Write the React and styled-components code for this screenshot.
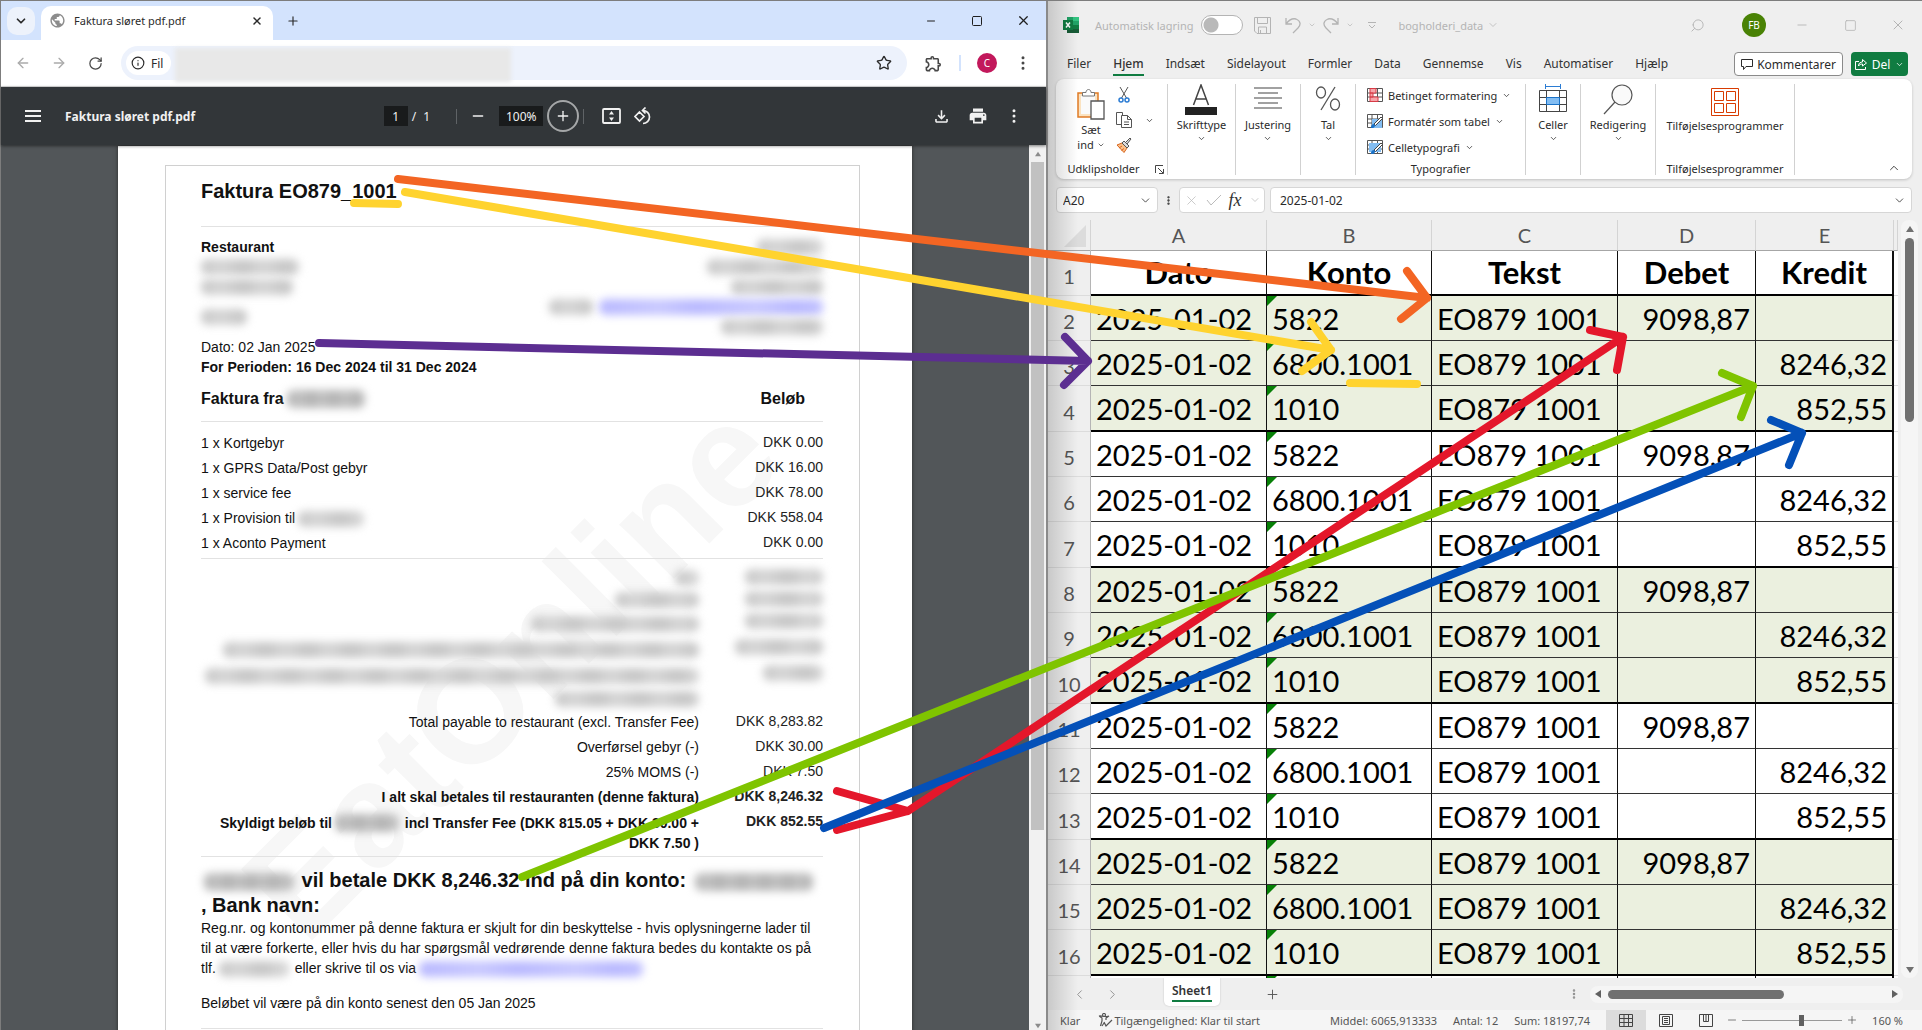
import React from "react";
import styled, { createGlobalStyle } from "styled-components";
import {
  ArrowLeft,
  ArrowRight,
  ChevronDown,
  ChevronLeft,
  ChevronRight,
  ChevronUp,
  Info,
  Minus,
  MoreVertical,
  Plus,
  RotateCw,
  Search,
  Square,
  Star,
  X,
} from "lucide-react";
import {
  MdOutlineExtension,
  MdOutlineFileDownload,
  MdPrint,
  MdPublic,
} from "react-icons/md";

const GlobalStyle = createGlobalStyle`
  * {
    box-sizing: border-box;
  }
  body {
    margin: 0;
    font-family: "Noto Sans", "Open Sans", sans-serif;
    font-size: 12px;
    color: #2b2b2b;
  }
  button,
  input {
    font: inherit;
    color: inherit;
  }
  button {
    display: inline-flex;
    align-items: center;
    justify-content: center;
    padding: 0;
    border: 0;
    background: none;
    white-space: nowrap;
  }
  svg {
    flex: none;
  }
`;

const Desktop = styled.div`
  position: relative;
  display: grid;
  grid-template-columns: minmax(0, 1048fr) minmax(0, 874fr);
  height: 100vh;
  overflow: hidden;
  border-top: 1px solid #7d7d7d;
`;

/* ---------- browser window ---------- */

const Browser = styled.section`
  display: flex;
  flex-direction: column;
  min-height: 0;
  border-left: 1px solid #7d7d7d;
  border-right: 2px solid #8a8a8a;
  background: #fff;
`;

const TabStrip = styled.div`
  display: flex;
  align-items: center;
  height: 39px;
  padding-left: 6px;
  background: #d3e3fd;
`;

const TabSearch = styled.button`
  width: 28px;
  height: 28px;
  border-radius: 10px;
  background: #edf2fb;
`;

const BrowserTab = styled.div`
  display: flex;
  align-items: center;
  align-self: flex-end;
  gap: 8px;
  width: 232px;
  height: 34px;
  margin: 0 13px 0 6px;
  padding: 0 10px 5px 8px;
  border-radius: 10px 10px 0 0;
  background: #fff;
  font-size: 11px;
  span {
    flex: 1;
  }
`;

const WindowButtons = styled.div`
  display: flex;
  margin-left: ${(p) => (p.$gap ? `${p.$gap}px` : "auto")};
  color: ${(p) => p.$color || "#1f1f1f"};
  button {
    width: ${(p) => p.$width || 46}px;
    height: 36px;
  }
`;

const AddressRow = styled.div`
  display: flex;
  align-items: center;
  height: 47px;
  padding: 0 5px 0 4px;
  border-bottom: 1px solid #dcdcdc;
  border-radius: 8px 8px 0 0;
  background: #fff;
`;

const RoundButton = styled.button`
  width: 36px;
  height: 36px;
  color: ${(p) => (p.$muted ? "#ababab" : "#474747")};
`;

const AddressBar = styled.label`
  display: flex;
  flex: 1;
  align-items: center;
  height: 34px;
  margin: 0 8px;
  padding: 0 15px 0 5px;
  border-radius: 17px;
  background: #edf2fc;
`;

const FileChip = styled.span`
  display: flex;
  align-items: center;
  gap: 6px;
  height: 24px;
  padding: 0 8px 0 5px;
  border-radius: 12px;
  background: #fff;
`;

const AddressInput = styled.input`
  flex: 0 1 336px;
  min-width: 0;
  height: 34px;
  margin: 3px auto 0 4px;
  border: 0;
  background: #e8e8e8;
  filter: blur(2px);
`;

const ToolDivider = styled.span`
  width: 2px;
  height: 16px;
  margin: 0 8px;
  background: #d3e3fd;
`;

const Avatar = styled.span`
  display: grid;
  place-items: center;
  width: ${(p) => p.$size}px;
  height: ${(p) => p.$size}px;
  border-radius: 50%;
  background: ${(p) => p.$color};
  color: #fff;
  font-size: 10px;
`;

/* ---------- pdf viewer ---------- */

const PdfBar = styled.div`
  display: grid;
  grid-template-columns: 1fr auto 1fr;
  align-items: center;
  height: 58px;
  padding: 0 23px 0 24px;
  background: #323639;
  color: #f1f1f1;
  z-index: 1;
  box-shadow: 0 1px 3px rgba(0, 0, 0, 0.5);
`;

const PdfGroup = styled.div`
  display: flex;
  align-items: center;
  justify-content: ${(p) => (p.$end ? "flex-end" : "flex-start")};
  gap: ${(p) => p.$gap || 0}px;
`;

const PdfControls = styled(PdfGroup)`
  padding-right: 12px;
`;

const PdfTitle = styled.h1`
  margin: 0;
  font-size: 12px;
  font-weight: 700;
`;

const DarkInput = styled.input`
  width: ${(p) => p.$width}px;
  height: 20px;
  padding: 0;
  border: 0;
  background: #191b1c;
  text-align: center;
`;

const PdfDivider = styled.span`
  width: 1px;
  height: 15px;
  margin-right: ${(p) => p.$space || 0}px;
  background: #5f6366;
`;

const ZoomInButton = styled.button`
  width: 32px;
  height: 32px;
  border: 2px solid #a5a7a8;
  border-radius: 50%;
`;

const Viewer = styled.div`
  display: flex;
  flex: 1;
  min-height: 0;
  background: #525659;
`;

const PageArea = styled.div`
  flex: 1;
  padding-top: 1px;
  overflow: hidden;
`;

const VScroll = styled.div`
  display: flex;
  flex-direction: column;
  align-items: center;
  justify-content: space-between;
  width: 17px;
  padding: 6px 0 1px;
  background: #f1f1f1;
  color: #8b8b8b;
`;

const VThumb = styled.div`
  width: 13px;
  height: 668px;
  margin: 5px 0 auto;
  background: #c1c1c1;
`;

const Page = styled.article`
  position: relative;
  width: 794px;
  margin: 0 auto;
  padding: 19px 52px 0 47px;
  background: #fff;
  color: #111;
  font: 14px/20px "Liberation Sans", Arial, sans-serif;
  box-shadow: 0 0 4px #2b2b2b;
`;

const Watermark = styled.div`
  position: absolute;
  top: 678px;
  left: 188px;
  color: #f7f7f7;
  font-size: 146px;
  font-weight: 700;
  line-height: 146px;
  transform: rotate(-45deg);
  transform-origin: 0 124px;
`;

const Frame = styled.div`
  padding: 13px 36px 60px 35px;
  border: 1px solid #d0d0d0;
  > * {
    position: relative;
  }
`;

const InvoiceTitle = styled.h2`
  margin: 0 0 23px;
  font-size: 20px;
  line-height: 24px;
`;

const Parties = styled.div`
  display: flex;
  justify-content: space-between;
  height: 111px;
  padding-top: 10px;
  border-top: 1px solid #e2e2e2;
`;

const Party = styled.div`
  display: flex;
  flex-direction: column;
  align-items: ${(p) => (p.$right ? "flex-end" : "flex-start")};
`;

const PartyLine = styled.div`
  display: flex;
  gap: 6px;
  height: 20px;
  margin-top: ${(p) => (p.$spaced ? 10 : 0)}px;
`;

const Redacted = styled.span`
  display: inline-block;
  width: ${(p) => p.$width}px;
  height: ${(p) => (p.$dark ? 18 : 16)}px;
  margin: ${(p) => (p.$inline ? "0 2px 0 3px" : "2px 0")};
  border-radius: 7px;
  vertical-align: ${(p) => (p.$inline ? "-4px" : "middle")};
  background: ${(p) =>
    p.$link
      ? "repeating-linear-gradient(90deg, #b9b9ff, #c8c8ff 61px, #b9b9ff 97px)"
      : p.$dark
      ? "repeating-linear-gradient(90deg, #b2b2b2, #c2c2c2 13px, #b2b2b2 23px)"
      : "repeating-linear-gradient(90deg, #c6c6c6, #d6d6d6 19px, #c6c6c6 43px)"};
  filter: blur(4px);
`;

const PlainLine = styled.p`
  margin: 0;
  font-weight: ${(p) => (p.$bold ? 700 : 400)};
`;

const InvoiceTable = styled.table`
  width: 100%;
  margin-top: ${(p) => p.$gap || 0}px;
  padding-top: ${(p) => p.$top}px;
  border-top: ${(p) => (p.$rule ? "1px solid #e2e2e2" : "0")};
  border-spacing: 0;
`;

const HeadCell = styled.th`
  height: 44px;
  padding: 0 ${(p) => (p.$right ? 18 : 0)}px 0 0;
  font-size: 16px;
  text-align: ${(p) => (p.$right ? "right" : "left")};
`;

const InvoiceRow = styled.tr`
  height: ${(p) => p.$height || 25}px;
  font-weight: ${(p) => (p.$bold ? 700 : 400)};
`;

const LabelCell = styled.td`
  padding: 0;
  text-align: ${(p) => (p.$right ? "right" : "left")};
`;

const AmountCell = styled.td`
  width: 124px;
  padding: 0;
  text-align: right;
  vertical-align: top;
  line-height: ${(p) => p.$line || 25}px;
  color: #222;
`;

const Payout = styled.h3`
  margin: 0;
  padding-top: 11px;
  border-top: 1px solid #e2e2e2;
  font-size: 20px;
  line-height: 25px;
`;

const Note = styled.p`
  margin: 0 0 15px;
`;

const PageRule = styled.hr`
  margin: 0;
  border: 0;
  border-top: 1px solid #e2e2e2;
`;

/* ---------- spreadsheet window ---------- */

const Excel = styled.section`
  position: relative;
  display: flex;
  flex-direction: column;
  min-width: 0;
  min-height: 0;
  background: #efefef;
  font-size: 11px;
  &::after {
    content: "";
    position: absolute;
    inset: 0 auto 0 0;
    width: 30px;
    background: linear-gradient(90deg, rgba(0, 0, 0, 0.16), transparent);
    pointer-events: none;
  }
`;

const TitleBar = styled.div`
  display: flex;
  align-items: center;
  height: 46px;
  padding: 2px 0 0 15px;
  color: #b4b4b4;
`;

const AutoSave = styled.label`
  display: flex;
  align-items: center;
  gap: 8px;
  margin: 0 11px 0 15px;
`;

const Toggle = styled.input`
  appearance: none;
  width: 42px;
  height: 20px;
  margin: 0;
  border: 1px solid #b4b4b4;
  border-radius: 10px;
  background: radial-gradient(circle at 9px 9px, #b9b9b9 7px, #fff 8px);
`;

const QuickTools = styled.div`
  display: flex;
  align-items: center;
  gap: 7px;
  margin-right: 22px;
`;

const FileName = styled.button`
  gap: 4px;
`;

const TitleEnd = styled.div`
  display: flex;
  align-items: center;
  gap: 37px;
  margin-left: auto;
`;

const TitleSearch = styled(Search)`
  transform: scaleX(-1);
`;

const MenuRow = styled.nav`
  display: flex;
  align-items: center;
  gap: 22px;
  height: 32px;
  padding: 2px 14px 0 19px;
  font-size: 12px;
`;

const MenuLink = styled.a`
  padding: 3px 0 2px;
  border-bottom: 2px solid ${(p) => (p.$active ? "#107c41" : "transparent")};
  color: #333;
  font-weight: ${(p) => (p.$active ? 500 : 400)};
  text-decoration: none;
`;

const CommentButton = styled.button`
  gap: 4px;
  height: 24px;
  margin-left: auto;
  padding: 0 6px;
  border: 1px solid #8a8a8a;
  border-radius: 4px;
  background: #fff;
`;

const ShareButton = styled.button`
  gap: 5px;
  width: 57px;
  height: 24px;
  margin-left: -14px;
  border-radius: 4px;
  background: #107c41;
  color: #fff;
`;

const Ribbon = styled.div`
  display: flex;
  height: 100px;
  margin: 0 10px 8px 8px;
  padding: 5px 0 4px;
  border-radius: 8px;
  background: #fff;
  box-shadow: 0 1px 3px rgba(0, 0, 0, 0.2);
`;

const Group = styled.div`
  display: flex;
  flex-direction: column;
  align-items: center;
  justify-content: space-between;
  flex: none;
  width: ${(p) => p.$width}px;
  border-right: 1px solid #d1d1d1;
`;

const BigButton = styled.button`
  flex-direction: column;
  gap: 2px;
  line-height: 15px;
`;

const GroupName = styled.div`
  position: relative;
  width: 100%;
  line-height: 12px;
  text-align: center;
  padding-right: ${(p) => (p.$launcher ? 16 : 0)}px;
  svg {
    position: absolute;
    right: 3px;
    top: 2px;
  }
`;

const Clipboard = styled.div`
  display: grid;
  grid-template-columns: 32px 16px 16px;
  gap: 9px;
  width: 100%;
  padding: 3px 0 0 19px;
`;

const SideIcons = styled.div`
  display: flex;
  flex-direction: column;
  gap: 9px;
`;

const StyleList = styled.div`
  display: flex;
  flex-direction: column;
  gap: 10px;
  align-self: flex-start;
  padding: 3px 0 0 11px;
`;

const StyleButton = styled.button`
  justify-content: flex-start;
  gap: 5px;
  height: 16px;
`;

const RibbonEnd = styled.div`
  display: flex;
  flex: 1;
  align-items: flex-end;
  justify-content: flex-end;
  padding-right: 11px;
`;

const FormulaRow = styled.div`
  display: flex;
  align-items: center;
  gap: 5px;
  height: 26px;
  margin: 0 10px 0 8px;
  font-size: 12px;
`;

const FieldBox = styled.label`
  display: flex;
  align-items: center;
  flex: ${(p) => (p.$width ? `0 0 ${p.$width}px` : 1)};
  min-width: 0;
  height: 26px;
  padding: 0 5px;
  border: 1px solid #d6d6d6;
  border-radius: 4px;
  background: #fff;
`;

const FieldInput = styled.input`
  flex: 1;
  width: 0;
  min-width: 0;
  padding: 0 0 0 ${(p) => (p.$wide ? 4 : 1)}px;
  border: 0;
  background: none;
`;

const FxBox = styled.div`
  display: flex;
  align-items: center;
  justify-content: space-around;
  flex: 0 0 86px;
  height: 26px;
  border: 1px solid #d6d6d6;
  border-radius: 4px;
  background: #fff;
  color: #bbb;
`;

const Fx = styled.button`
  color: #333;
  font: italic 18px "Liberation Serif", serif;
`;

const SheetArea = styled.div`
  display: flex;
  flex: 1;
  min-height: 0;
  padding-top: 7px;
  overflow: hidden;
`;

const SheetClip = styled.div`
  flex: 1;
  min-width: 0;
  overflow: hidden;
`;

const Sheet = styled.table`
  width: 100%;
  table-layout: fixed;
  border-spacing: 0;
  color: #000;
  font: 29px/35px Lato, Carlito, sans-serif;
`;

const ColWidth = styled.col`
  width: ${(p) => (p.$width ? `${p.$width}px` : "auto")};
`;

const ColHead = styled.th`
  height: 31px;
  padding: 0;
  border-right: 1px solid #d4d4d4;
  border-bottom: 1px solid #a6a6a6;
  color: #555;
  font-size: 20px;
  font-weight: 400;
  line-height: 24px;
`;

const CornerHead = styled(ColHead)`
  text-align: right;
  padding-right: 4px;
  svg {
    display: inline-block;
    vertical-align: bottom;
  }
`;

const SheetRow = styled.tr`
  height: ${(p) => (p.$last ? 46 : 45)}px;
`;

const RowHead = styled.th`
  padding: 7px 0 0;
  border-right: 1px solid #b5b5b5;
  border-bottom: 1px solid #dcdcdc;
  color: #555;
  font-size: 20px;
  font-weight: 400;
`;

const Cell = styled.td`
  position: relative;
  padding: 0 5px;
  overflow: hidden;
  white-space: nowrap;
  border-right: ${(p) => (p.$edge ? 2 : 1)}px solid #111;
  border-bottom: ${(p) => (p.$thick ? "2px solid #000" : "1px solid #333")};
  background: ${(p) => (p.$shade ? "#ebf0df" : "#fff")};
  text-align: ${(p) => p.$align || "left"};
`;

const TitleCell = styled(Cell)`
  font-size: 31px;
  font-weight: 700;
`;

const ErrorMark = styled.span`
  position: absolute;
  top: 0;
  left: 0;
  border-top: 10px solid #078007;
  border-right: 10px solid transparent;
`;

const Filler = styled.td`
  border-bottom: 1px solid #dcdcdc;
  background: #fff;
`;

const SheetScroll = styled.div`
  display: flex;
  flex-direction: column;
  align-items: center;
  width: 17px;
  margin: 0 4px 0 3px;
  padding: 5px 0 4px;
  border-radius: 8px;
  background: #f5f5f5;
  color: #707070;
`;

const SheetThumb = styled.div`
  width: 9px;
  height: 184px;
  margin: 5px 0 auto;
  border-radius: 5px;
  background: #707070;
`;

const SheetTabs = styled.div`
  display: flex;
  align-items: center;
  height: 32px;
  padding: 0 19px 0 24px;
  color: #8f8f8f;
`;

const NavButtons = styled.div`
  display: flex;
  gap: 18px;
  width: 92px;
`;

const SheetTab = styled.button`
  align-self: flex-start;
  height: 28px;
  padding: 0 8px 2px;
  border-radius: 0 0 5px 5px;
  background: #fff;
  box-shadow: 0 0 2px rgba(0, 0, 0, 0.2);
  color: #333;
  font-size: 12px;
  font-weight: 600;
  span {
    border-bottom: 2px solid #107c41;
    line-height: 19px;
  }
`;

const AddSheet = styled.button`
  margin: 0 auto 0 45px;
  color: #555;
`;

const HScroll = styled.div`
  display: flex;
  align-items: center;
  width: 313px;
  height: 17px;
  margin-left: 10px;
  padding: 0 4px;
  border-radius: 8px;
  background: #f5f5f5;
  color: #606060;
`;

const HThumb = styled.div`
  width: 176px;
  height: 9px;
  margin: 0 auto 0 6px;
  border-radius: 5px;
  background: #707070;
`;

const StatusBar = styled.footer`
  display: flex;
  align-items: center;
  height: 20px;
  padding: 0 19px 0 12px;
  background: #f5f5f5;
  color: #555;
  white-space: nowrap;
`;

const Accessibility = styled.span`
  display: flex;
  align-items: center;
  gap: 1px;
  margin: 0 auto 0 18px;
`;

const Stat = styled.span`
  margin-right: 16px;
`;

const ViewButton = styled.button`
  width: 40px;
  height: 20px;
  background: ${(p) => (p.$active ? "#dcdcdc" : "none")};
  color: #444;
`;

const ZoomSlider = styled.input`
  appearance: none;
  width: 100px;
  height: 12px;
  margin: 0 4px;
  background: linear-gradient(#999, #999) center / 100% 1px no-repeat;
  &::-webkit-slider-thumb {
    appearance: none;
    width: 5px;
    height: 11px;
    background: #606060;
  }
`;

const ZoomValue = styled.output`
  margin-left: 14px;
`;

/* ---------- annotation arrows ---------- */

const Arrows = styled.svg`
  position: absolute;
  top: -1px;
  left: 0;
  width: 100%;
  pointer-events: none;
`;

const arrows = [
  { color: "#f36523", d: "M398 179L1427 298M1407 271L1427 298L1401 319" },
  {
    color: "#ffd32f",
    d: "M405 192L1331 350M1311 322L1331 350L1302 371M354 203L398 204M1350 383L1417 384",
  },
  { color: "#5c2e91", d: "M319 343L1088 361M1065 337L1088 361L1064 385" },
  {
    color: "#e4172b",
    d: "M837 791L908 811L837 830M908 811L1623 337M1590 330L1623 337L1617 370",
  },
  { color: "#7fc400", d: "M522 877L1753 386M1722 373L1753 386L1741 417" },
  { color: "#0450b8", d: "M824 828L1802 433M1771 420L1802 433L1789 465" },
];

const lines = [
  ["1 x Kortgebyr", "DKK 0.00"],
  ["1 x GPRS Data/Post gebyr", "DKK 16.00"],
  ["1 x service fee", "DKK 78.00"],
  ["1 x Provision til", "DKK 558.04", 66],
  ["1 x Aconto Payment", "DKK 0.00"],
];

const hiddenLines = [
  { height: 22, label: 24, amount: 78 },
  { height: 22, label: 84, amount: 78 },
  { height: 26, label: 168, amount: 78 },
  { height: 26, label: 476, amount: 88 },
  { height: 26, label: 494, amount: 60 },
  { height: 20, label: 144, amount: 0 },
];

const totals = [
  ["Total payable to restaurant (excl. Transfer Fee)", "DKK 8,283.82"],
  ["Overførsel gebyr (-)", "DKK 30.00"],
  ["25% MOMS (-)", "DKK 7.50"],
  ["I alt skal betales til restauranten (denne faktura)", "DKK 8,246.32", true],
];

const menu = [
  "Filer",
  "Hjem",
  "Indsæt",
  "Sidelayout",
  "Formler",
  "Data",
  "Gennemse",
  "Vis",
  "Automatiser",
  "Hjælp",
];

const columns = ["A", "B", "C", "D", "E"];
const titles = ["Dato", "Konto", "Tekst", "Debet", "Kredit"];

const pattern = [
  ["5822", "9098,87", ""],
  ["6800.1001", "", "8246,32"],
  ["1010", "", "852,55"],
];

const sheetRows = Array.from({ length: 15 }, (_, i) => ({
  number: i + 2,
  values: pattern[i % 3],
  shade: Math.floor(i / 3) % 2 === 0,
  last: i % 3 === 2,
}));

const Caret = ({ dir = "up", size = 8 }) => {
  const paths = {
    up: "M0 7L4 1L8 7Z",
    down: "M0 1L4 7L8 1Z",
    left: "M7 0L1 4L7 8Z",
    right: "M1 0L7 4L1 8Z",
  };
  return (
    <svg width={size} height={size} viewBox="0 0 8 8" fill="currentColor">
      <path d={paths[dir]} />
    </svg>
  );
};

const ExcelLogo = () => (
  <svg width="17" height="17" viewBox="0 0 17 17">
    <path fill="#21a366" d="M4 0h12v8H4z" />
    <path fill="#33c481" d="M10 0h6v4h-6z" />
    <path fill="#185c37" d="M4 8h12v8H4z" />
    <path fill="#107c41" d="M0 3h10v10H0zM10 8h6v4h-6z" />
    <path stroke="#fff" strokeWidth="1.5" d="M3 5.5l4 5M7 5.5l-4 5" />
  </svg>
);

const SaveIcon = () => (
  <svg width="17" height="17" viewBox="0 0 17 17" fill="none" stroke="currentColor">
    <path d="M.5 .5h16v16H3L.5 14zM3.500 .5v6h10v-6M4.500 16v-6h8v6M6.500 16v-3" />
  </svg>
);

const UndoIcon = ({ flip }) => (
  <svg width="16" height="17" viewBox="0 0 16 17" fill="none" stroke="currentColor" strokeWidth="1.3">
    <path
      transform={flip ? "matrix(-1 0 0 1 16 0)" : undefined}
      d="M1 1v6h6M1 7C4 3 7 1 11 2c5 2 5 6 2 9l-5 5"
    />
  </svg>
);

const CustomizeIcon = () => (
  <svg width="8" height="8" viewBox="0 0 8 8" fill="none" stroke="currentColor">
    <path d="M0 1.5h8M1 4l3 3 3-3" />
  </svg>
);

const PasteIcon = () => (
  <svg width="28" height="31" viewBox="0 0 28 31" fill="none">
    <path stroke="#e07b26" strokeWidth="1.5" fill="#fbe3c1" d="M1 4h20v24H1z" />
    <path fill="#fafafa" d="M4 7h14v18H4z" />
    <path stroke="#777" fill="#fff" d="M5.500 7V3.500h3.500c0-4 5-4 5 0h3.500V7z" />
    <path stroke="#555" strokeWidth="1.3" fill="#fff" d="M14 12h13v18H14z" />
  </svg>
);

const CutIcon = () => (
  <svg width="16" height="16" viewBox="0 0 16 16" fill="none">
    <path stroke="#555" d="M4 0l6.500 11M12 0L5.500 11" />
    <circle cx="5" cy="13" r="2" stroke="#2b7cd3" strokeWidth="1.5" />
    <circle cx="11" cy="13" r="2" stroke="#2b7cd3" strokeWidth="1.5" />
  </svg>
);

const CopyIcon = () => (
  <svg width="16" height="16" viewBox="0 0 16 16" fill="#fff" stroke="#555">
    <path d="M.5 .5h6v12h-6z" />
    <path d="M5.500 3.500h6l4 4v8h-10zM11.500 3.500v4h4M8 10h5M8 12.500h5" />
  </svg>
);

const BrushIcon = () => (
  <svg width="16" height="16" viewBox="0 0 16 16" fill="none">
    <path stroke="#d8661e" fill="#fbc089" d="M1 8l5-2 5 5-3 4.500z" />
    <path stroke="#d8661e" d="M3 11l3-2M5.500 13.500l2.500-2" />
    <path stroke="#555" fill="#ddd" d="M6 6l2-2 5 5-2 2zM10 5l4-4 1 1-4 5" />
  </svg>
);

const LauncherIcon = () => (
  <svg width="9" height="9" viewBox="0 0 9 9" fill="none" stroke="#444">
    <path d="M.5 8V.5H8M3 3l5 5M8.500 4v4.500H4" />
  </svg>
);

const FontIcon = () => (
  <svg width="32" height="31" viewBox="0 0 32 31" fill="none">
    <path stroke="#444" strokeWidth="1.5" d="M8.500 21L16 1l7.500 20M11 15h10" />
    <path fill="#222" d="M0 23h32v8H0z" />
  </svg>
);

const AlignIcon = () => (
  <svg width="28" height="31" viewBox="0 0 28 31" stroke="#444" strokeWidth="1.2">
    <path d="M0 4h28M4 9h20M0 14h28M4 19h20M0 24h28" />
  </svg>
);

const PercentIcon = () => (
  <svg width="26" height="31" viewBox="0 0 26 31" fill="none" stroke="#555" strokeWidth="1.3">
    <ellipse cx="6" cy="8.500" rx="4.500" ry="5.500" />
    <ellipse cx="20" cy="20.500" rx="4.500" ry="5.500" />
    <path d="M20 3L6 26" />
  </svg>
);

const TableIcon = ({ kind }) => (
  <svg width="16" height="16" viewBox="0 0 16 16" fill="#fff">
    <path stroke="#555" d="M.5 1.500h15v13H.5zM.5 6h15M.5 10h15M5 1.500v13M10.500 1.500v13" />
    {kind === "rules" ? (
      <path stroke="#d83b46" fill="#f6a5aa" d="M3 1.500h6V6H3zM3 10h8v4.500H3zM3 6h3v4H3z" />
    ) : (
      <>
        <path fill="#83bdf2" d={kind === "table" ? "M5 6h10v9H5z" : "M2 4h12v9H2z"} />
        <path stroke="#444" fill="#fff" d="M7 11l7-7 1.500 1.500-7 7z" />
        <path fill="#1a72c8" d="M4 15c0-3 1-4 3-4l1 1c0 3-2 3-4 3z" />
      </>
    )}
  </svg>
);

const CellsIcon = () => (
  <svg width="28" height="31" viewBox="0 0 28 31" fill="none">
    <path stroke="#2b7cd3" d="M6 2.500h16M6.500 0v5M21.500 0v5" />
    <path fill="#83bdf2" d="M7 13h14v8H7z" />
    <path stroke="#444" d="M.5 6.500h27v21H.5zM.5 13.500h27M.5 20.500h27M7.500 6.500v21M20.500 6.500v21" />
    <path stroke="#1a72c8" d="M7.500 13.500h13v7h-13z" />
  </svg>
);

const FindIcon = () => (
  <svg width="30" height="31" viewBox="0 0 30 31" fill="#fafafa" stroke="#555" strokeWidth="1.2">
    <circle cx="19" cy="11" r="10" />
    <path d="M12 18L1 30" />
  </svg>
);

const AddinsIcon = () => (
  <svg width="28" height="28" viewBox="0 0 28 28" fill="none" stroke="#d83b01">
    <path d="M.5 .5h27v27H.5zM3.500 3.500h9v9h-9zM15.500 3.500h9v9h-9zM3.500 15.500h9v9h-9zM15.500 15.500h9v9h-9z" />
  </svg>
);

const CommentIcon = () => (
  <svg width="12" height="12" viewBox="0 0 12 12" fill="none" stroke="currentColor">
    <path d="M.5 1.500h11v7H5l-2.500 3v-3h-2z" />
  </svg>
);

const ShareIcon = () => (
  <svg width="12" height="12" viewBox="0 0 12 12" fill="none" stroke="currentColor">
    <path d="M4 3.500H.5v8h10V9M3.500 8c0-3 2-4 4-4V1.500L11.500 5 7.500 8V6c-2 0-3 .5-4 2z" />
  </svg>
);

const FitIcon = () => (
  <svg width="19" height="16" viewBox="0 0 19 16" fill="none">
    <rect x="1" y="1" width="17" height="14" rx="1" stroke="#f1f1f1" strokeWidth="1.8" />
    <path fill="#f1f1f1" d="M9.500 3L12 6.500H7zM9.500 13L7 9.500h5z" />
  </svg>
);

const RotateIcon = () => (
  <svg width="18" height="18" viewBox="0 0 18 18" fill="none" stroke="#f1f1f1" strokeWidth="1.7">
    <path d="M5.500 5L10 9.500 5.500 14 1 9.500zM9 3.500a6.500 6.500 0 1 1 0 13M11.500 .5L8.500 3.500l3 3" />
  </svg>
);

const AccessIcon = () => (
  <svg width="15" height="14" viewBox="0 0 15 14" fill="none" stroke="currentColor" strokeWidth="1.2">
    <circle cx="6" cy="2" r="1.500" />
    <path d="M1 3l3 2v3l-1.500 5M11 3L8 5v2M1 3c2-1 8 2 10 0M6 9l2 4 6-6M4 13l2-3" />
  </svg>
);

const ViewIcon = ({ kind }) => {
  const paths = {
    normal: "M.5 .5h13v12H.5zM.5 4.500h13M.5 8.500h13M5 .5v12M9.500 .5v12",
    layout: "M.5 .5h13v12H.5zM3.500 2.500h7v8h-7zM5 4.500h4M5 6.500h4M5 8.500h4",
    breaks: "M.5 .5h13v12H.5zM4.500 .5v7h5v-7M7 .5v7",
  };
  return (
    <svg width="14" height="13" viewBox="0 0 14 13" fill="none" stroke="currentColor">
      <path d={paths[kind]} />
    </svg>
  );
};

function Invoice() {
  return (
    <Page>
      <Watermark aria-hidden="true">EatOnline</Watermark>
      <Frame>
        <InvoiceTitle>Faktura EO879_1001</InvoiceTitle>
        <Parties>
          <Party>
            <strong>Restaurant</strong>
            <PartyLine>
              <Redacted $width={98} />
            </PartyLine>
            <PartyLine>
              <Redacted $width={92} />
            </PartyLine>
            <PartyLine $spaced>
              <Redacted $width={46} />
            </PartyLine>
          </Party>
          <Party $right>
            <PartyLine>
              <Redacted $width={66} />
            </PartyLine>
            <PartyLine>
              <Redacted $width={116} />
            </PartyLine>
            <PartyLine>
              <Redacted $width={92} />
            </PartyLine>
            <PartyLine>
              <Redacted $width={44} />
              <Redacted $width={224} $link />
            </PartyLine>
            <PartyLine>
              <Redacted $width={102} />
            </PartyLine>
          </Party>
        </Parties>
        <PlainLine>Dato: 02 Jan 2025</PlainLine>
        <PlainLine $bold>For Perioden: 16 Dec 2024 til 31 Dec 2024</PlainLine>

        <InvoiceTable $top={0}>
          <thead>
            <tr>
              <HeadCell>
                Faktura fra
                <Redacted $width={78} $inline $dark />
              </HeadCell>
              <HeadCell $right>Beløb</HeadCell>
            </tr>
          </thead>
        </InvoiceTable>
        <InvoiceTable $top={8} $rule>
          <tbody>
            {lines.map(([label, amount, hidden]) => (
              <InvoiceRow key={label}>
                <LabelCell>
                  {label}
                  {hidden && <Redacted $width={hidden} $inline />}
                </LabelCell>
                <AmountCell>{amount}</AmountCell>
              </InvoiceRow>
            ))}
          </tbody>
        </InvoiceTable>
        <InvoiceTable $gap={3} $top={7} $rule>
          <tbody>
            {hiddenLines.map((line, idx) => (
              <InvoiceRow key={idx} $height={line.height}>
                <LabelCell $right>
                  <Redacted $width={line.label} />
                </LabelCell>
                <AmountCell $line={20}>
                  {line.amount > 0 && <Redacted $width={line.amount} />}
                </AmountCell>
              </InvoiceRow>
            ))}
            {totals.map(([label, amount, bold]) => (
              <InvoiceRow key={label} $bold={bold}>
                <LabelCell $right>{label}</LabelCell>
                <AmountCell>{amount}</AmountCell>
              </InvoiceRow>
            ))}
            <InvoiceRow $bold $height={47}>
              <LabelCell $right>
                Skyldigt beløb til
                <Redacted $width={64} $inline $dark /> incl Transfer Fee (DKK
                815.05 + DKK 30.00 +<br />
                DKK 7.50 )
              </LabelCell>
              <AmountCell>DKK 852.55</AmountCell>
            </InvoiceRow>
          </tbody>
        </InvoiceTable>
        <Payout>
          <Redacted $width={90} $inline $dark /> vil betale DKK 8,246.32 ind på
          din konto: <Redacted $width={118} $inline $dark />
          <br />, Bank navn:
        </Payout>
        <Note>
          Reg.nr. og kontonummer på denne faktura er skjult for din beskyttelse
          - hvis oplysningerne lader til til at være forkerte, eller hvis du har
          spørgsmål vedrørende denne faktura bedes du kontakte os på tlf.
          <Redacted $width={70} $inline /> eller skrive til os via
          <Redacted $width={224} $inline $link />
        </Note>
        <Note>Beløbet vil være på din konto senest den 05 Jan 2025</Note>
        <PageRule />
      </Frame>
    </Page>
  );
}

function BrowserWindow() {
  return (
    <Browser>
      <TabStrip>
        <TabSearch aria-label="Søg i faner">
          <ChevronDown size={14} strokeWidth={3} />
        </TabSearch>
        <BrowserTab>
          <MdPublic size={17} color="#8c8c8c" />
          <span>Faktura sløret pdf.pdf</span>
          <button aria-label="Luk fane">
            <X size={12} strokeWidth={3} />
          </button>
        </BrowserTab>
        <button aria-label="Ny fane">
          <Plus size={14} />
        </button>
        <WindowButtons>
          <button aria-label="Minimer">
            <Minus size={12} />
          </button>
          <button aria-label="Maksimer">
            <Square size={12} />
          </button>
          <button aria-label="Luk">
            <X size={15} />
          </button>
        </WindowButtons>
      </TabStrip>
      <AddressRow>
        <RoundButton $muted aria-label="Tilbage">
          <ArrowLeft size={16} />
        </RoundButton>
        <RoundButton $muted aria-label="Frem">
          <ArrowRight size={16} />
        </RoundButton>
        <RoundButton aria-label="Genindlæs">
          <RotateCw size={15} />
        </RoundButton>
        <AddressBar>
          <FileChip>
            <Info size={14} /> Fil
          </FileChip>
          <AddressInput aria-label="Adresse" />
          <Star size={16} />
        </AddressBar>
        <RoundButton aria-label="Udvidelser">
          <MdOutlineExtension size={19} />
        </RoundButton>
        <ToolDivider />
        <RoundButton aria-label="Profil">
          <Avatar $size={20} $color="#c2185b">
            C
          </Avatar>
        </RoundButton>
        <RoundButton aria-label="Menu">
          <MoreVertical size={18} />
        </RoundButton>
      </AddressRow>
      <PdfBar>
        <PdfGroup $gap={24}>
          <button aria-label="Sidepanel">
            <svg width="16" height="12" viewBox="0 0 16 12" fill="#f1f1f1">
              <path d="M0 0h16v2H0zM0 5h16v2H0zM0 10h16v2H0z" />
            </svg>
          </button>
          <PdfTitle>Faktura sløret pdf.pdf</PdfTitle>
        </PdfGroup>
        <PdfControls $gap={13}>
          <PdfGroup $gap={4}>
            <DarkInput $width={24} aria-label="Side" defaultValue="1" />
            <span>/</span>
            <span>&nbsp;1</span>
          </PdfGroup>
          <PdfGroup />
          <PdfDivider />
          <button aria-label="Zoom ud">
            <Minus size={16} />
          </button>
          <PdfGroup $gap={4}>
            <DarkInput $width={44} aria-label="Zoom" defaultValue="100%" />
            <ZoomInButton aria-label="Zoom ind">
              <Plus size={16} />
            </ZoomInButton>
            <PdfDivider $space={5} />
          </PdfGroup>
          <PdfGroup $gap={13}>
            <button aria-label="Tilpas til siden">
              <FitIcon />
            </button>
            <button aria-label="Roter">
              <RotateIcon />
            </button>
          </PdfGroup>
        </PdfControls>
        <PdfGroup $end $gap={17}>
          <button aria-label="Download">
            <MdOutlineFileDownload size={19} />
          </button>
          <button aria-label="Udskriv">
            <MdPrint size={20} />
          </button>
          <button aria-label="Flere handlinger">
            <MoreVertical size={18} />
          </button>
        </PdfGroup>
      </PdfBar>
      <Viewer>
        <PageArea>
          <Invoice />
        </PageArea>
        <VScroll>
          <Caret dir="up" size={6} />
          <VThumb />
          <Caret dir="down" size={6} />
        </VScroll>
      </Viewer>
    </Browser>
  );
}

function RibbonBar() {
  return (
    <Ribbon>
      <Group $width={112}>
        <Clipboard>
          <BigButton>
            <PasteIcon />
            <span>
              Sæt
              <br />
              ind <ChevronDown size={8} />
            </span>
          </BigButton>
          <SideIcons>
            <button aria-label="Klip">
              <CutIcon />
            </button>
            <button aria-label="Kopiér">
              <CopyIcon />
            </button>
            <button aria-label="Formatpensel">
              <BrushIcon />
            </button>
          </SideIcons>
          <button aria-label="Kopiér valg">
            <ChevronDown size={9} />
          </button>
        </Clipboard>
        <GroupName $launcher>
          Udklipsholder
          <LauncherIcon />
        </GroupName>
      </Group>
      <Group $width={68}>
        <BigButton>
          <FontIcon />
          Skrifttype
          <ChevronDown size={9} />
        </BigButton>
      </Group>
      <Group $width={65}>
        <BigButton>
          <AlignIcon />
          Justering
          <ChevronDown size={9} />
        </BigButton>
      </Group>
      <Group $width={55}>
        <BigButton>
          <PercentIcon />
          Tal
          <ChevronDown size={9} />
        </BigButton>
      </Group>
      <Group $width={170}>
        <StyleList>
          <StyleButton>
            <TableIcon kind="rules" /> Betinget formatering
            <ChevronDown size={9} />
          </StyleButton>
          <StyleButton>
            <TableIcon kind="table" /> Formatér som tabel
            <ChevronDown size={9} />
          </StyleButton>
          <StyleButton>
            <TableIcon kind="cell" /> Celletypografi
            <ChevronDown size={9} />
          </StyleButton>
        </StyleList>
        <GroupName>Typografier</GroupName>
      </Group>
      <Group $width={55}>
        <BigButton>
          <CellsIcon />
          Celler
          <ChevronDown size={9} />
        </BigButton>
      </Group>
      <Group $width={75}>
        <BigButton>
          <FindIcon />
          Redigering
          <ChevronDown size={9} />
        </BigButton>
      </Group>
      <Group $width={139}>
        <BigButton>
          <svg width="1" height="2" />
          <AddinsIcon />
          Tilføjelsesprogrammer
        </BigButton>
        <GroupName>Tilføjelsesprogrammer</GroupName>
      </Group>
      <RibbonEnd>
        <button aria-label="Skjul båndet">
          <ChevronUp size={14} strokeWidth={1.5} />
        </button>
      </RibbonEnd>
    </Ribbon>
  );
}

function SheetGrid() {
  return (
    <Sheet>
      <colgroup>
        {[43, 176, 165, 186, 138, 138, 0].map((width, idx) => (
          <ColWidth key={idx} $width={width} />
        ))}
      </colgroup>
      <thead>
        <tr>
          <CornerHead>
            <svg width="22" height="22" viewBox="0 0 22 22" fill="#dcdcdc">
              <path d="M22 0v22H0z" />
            </svg>
          </CornerHead>
          {columns.map((letter) => (
            <ColHead key={letter}>{letter}</ColHead>
          ))}
          <ColHead />
        </tr>
      </thead>
      <tbody>
        <SheetRow>
          <RowHead>1</RowHead>
          {titles.map((name) => (
            <TitleCell key={name} $thick $align="center" $edge={name === "Kredit"}>
              {name}
            </TitleCell>
          ))}
          <Filler />
        </SheetRow>
        {sheetRows.map(({ number, values, shade, last }) => (
          <SheetRow key={number} $last={last}>
            <RowHead>{number}</RowHead>
            <Cell $shade={shade} $thick={last}>
              2025-01-02
            </Cell>
            <Cell $shade={shade} $thick={last}>
              <ErrorMark />
              {values[0]}
            </Cell>
            <Cell $shade={shade} $thick={last}>
              EO879 1001
            </Cell>
            <Cell $shade={shade} $thick={last} $align="right">
              {values[1]}
            </Cell>
            <Cell $shade={shade} $thick={last} $align="right" $edge>
              {values[2]}
            </Cell>
            <Filler />
          </SheetRow>
        ))}
        {/* top edge of the next row */}
        <SheetRow>
          <RowHead />
          {columns.map((letter) => (
            <Cell key={letter} $edge={letter === "E"}>
              {letter === "B" && <ErrorMark />}
            </Cell>
          ))}
          <Filler />
        </SheetRow>
      </tbody>
    </Sheet>
  );
}

function ExcelWindow() {
  return (
    <Excel>
      <TitleBar>
        <ExcelLogo />
        <AutoSave>
          Automatisk lagring
          <Toggle type="checkbox" />
        </AutoSave>
        <QuickTools>
          <button aria-label="Gem">
            <SaveIcon />
          </button>
          <span />
          <button aria-label="Fortryd">
            <UndoIcon />
          </button>
          <ChevronDown size={8} />
          <button aria-label="Annuller Fortryd">
            <UndoIcon flip />
          </button>
          <ChevronDown size={8} />
          <span />
          <button aria-label="Tilpas værktøjslinje">
            <CustomizeIcon />
          </button>
        </QuickTools>
        <FileName>
          bogholderi_data
          <ChevronDown size={12} strokeWidth={1.5} />
        </FileName>
        <TitleEnd>
          <TitleSearch size={15} strokeWidth={1.5} />
          <Avatar $size={24} $color="#498205">
            FB
          </Avatar>
        </TitleEnd>
        <WindowButtons $color="#b4b4b4" $width={48} $gap={12}>
          <button aria-label="Minimer">
            <Minus size={14} strokeWidth={1.5} />
          </button>
          <button aria-label="Maksimer">
            <Square size={13} strokeWidth={1.5} />
          </button>
          <button aria-label="Luk">
            <X size={16} strokeWidth={1.5} />
          </button>
        </WindowButtons>
      </TitleBar>
      <MenuRow>
        {menu.map((item) => (
          <MenuLink key={item} href={`#${item}`} $active={item === "Hjem"}>
            {item}
          </MenuLink>
        ))}
        <CommentButton>
          <CommentIcon /> Kommentarer
        </CommentButton>
        <ShareButton>
          <ShareIcon /> Del <ChevronDown size={9} />
        </ShareButton>
      </MenuRow>
      <RibbonBar />
      <FormulaRow>
        <FieldBox $width={102}>
          <FieldInput aria-label="Navneboks" defaultValue="A20" />
          <ChevronDown size={13} strokeWidth={1.5} />
        </FieldBox>
        <MoreVertical size={11} strokeWidth={3} />
        <FxBox>
          <X size={15} strokeWidth={1.2} />
          <svg width="16" height="12" viewBox="0 0 16 12" fill="none" stroke="currentColor">
            <path d="M1 6l4 5L15 1" />
          </svg>
          <Fx>fx</Fx>
          <ChevronDown size={12} strokeWidth={1.5} />
        </FxBox>
        <FieldBox>
          <FieldInput $wide aria-label="Formellinje" defaultValue="2025-01-02" />
          <ChevronDown size={13} strokeWidth={1.5} />
        </FieldBox>
      </FormulaRow>
      <SheetArea>
        <SheetClip>
          <SheetGrid />
        </SheetClip>
        <SheetScroll>
          <Caret dir="up" />
          <SheetThumb />
          <Caret dir="down" />
        </SheetScroll>
      </SheetArea>
      <SheetTabs>
        <NavButtons>
          <button aria-label="Forrige ark">
            <ChevronLeft size={15} strokeWidth={1.5} />
          </button>
          <button aria-label="Næste ark">
            <ChevronRight size={15} strokeWidth={1.5} />
          </button>
        </NavButtons>
        <SheetTab>
          <span>Sheet1</span>
        </SheetTab>
        <AddSheet aria-label="Nyt ark">
          <Plus size={15} strokeWidth={1.5} />
        </AddSheet>
        <MoreVertical size={12} strokeWidth={3} />
        <HScroll>
          <Caret dir="left" />
          <HThumb />
          <Caret dir="right" />
        </HScroll>
      </SheetTabs>
      <StatusBar>
        Klar
        <Accessibility>
          <AccessIcon />
          Tilgængelighed: Klar til start
        </Accessibility>
        <Stat>Middel: 6065,913333</Stat>
        <Stat>Antal: 12</Stat>
        <Stat>Sum: 18197,74</Stat>
        <ViewButton $active aria-label="Normal">
          <ViewIcon kind="normal" />
        </ViewButton>
        <ViewButton aria-label="Sidelayout">
          <ViewIcon kind="layout" />
        </ViewButton>
        <ViewButton aria-label="Vis sideskift">
          <ViewIcon kind="breaks" />
        </ViewButton>
        <button aria-label="Zoom ud">
          <Minus size={12} strokeWidth={1.5} />
        </button>
        <ZoomSlider type="range" aria-label="Zoom" min="0" max="100" defaultValue="60" />
        <button aria-label="Zoom ind">
          <Plus size={12} strokeWidth={1.5} />
        </button>
        <ZoomValue>160 %</ZoomValue>
      </StatusBar>
    </Excel>
  );
}

function App() {
  return (
    <>
      <GlobalStyle />
      <Desktop>
        <BrowserWindow />
        <ExcelWindow />
        <Arrows viewBox="0 0 1922 1030" aria-hidden="true">
          {arrows.map(({ color, d }) => (
            <path
              key={color}
              d={d}
              fill="none"
              stroke={color}
              strokeWidth="8"
              strokeLinecap="round"
              strokeLinejoin="round"
            />
          ))}
        </Arrows>
      </Desktop>
    </>
  );
}

export default App;
